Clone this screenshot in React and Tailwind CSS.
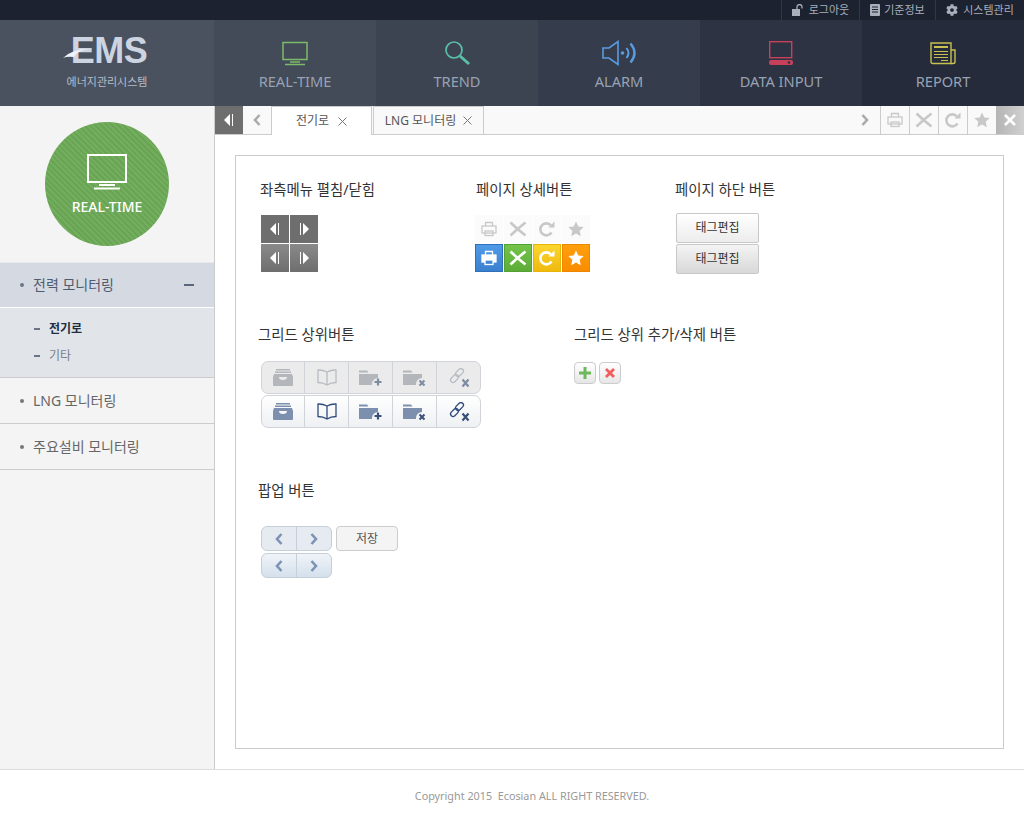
import { FaCog } from 'react-icons/fa'

const FONT = '[font-family:"Noto_Sans","Noto_Sans_CJK_KR",sans-serif]'

// 상단 메뉴 아이콘
function MonitorIcon() {
  return (
    <svg width="28" height="26" viewBox="0 0 28 26" fill="none">
      <rect x="2" y="2.500" width="24" height="17" stroke="#7dbb68" strokeWidth="1.500" />
      <path d="M9 22h10" stroke="#7dbb68" strokeWidth="1.500" />
      <path d="M4 24.500h20" stroke="#7dbb68" strokeWidth="1.500" />
    </svg>
  )
}

function SearchIcon() {
  return (
    <svg width="28" height="26" viewBox="0 0 28 26" fill="none">
      <circle cx="11" cy="10" r="8" stroke="#5bbfa8" strokeWidth="1.700" />
      <path d="M17 16l9 8" stroke="#5bbfa8" strokeWidth="3" />
    </svg>
  )
}

function AlarmIcon() {
  return (
    <svg width="36" height="26" viewBox="0 0 36 26" fill="none" stroke="#5b9be0">
      <path d="M2 8h6l9-6.500v23L8 18H2z" strokeWidth="1.600" />
      <circle cx="21.500" cy="13" r="1.800" fill="#5b9be0" stroke="none" />
      <path d="M25.500 8q4 5 0 10" strokeWidth="2" />
      <path d="M29.500 3.500q8 9.500 0 19" strokeWidth="2.400" />
    </svg>
  )
}

function DataInputIcon() {
  return (
    <svg width="26" height="26" viewBox="0 0 26 26" fill="none">
      <rect x="1.700" y="1.700" width="22" height="16" stroke="#c8405a" strokeWidth="1.400" />
      <rect x="1" y="20" width="24" height="5" rx="2" fill="#c8405a" />
      <circle cx="21" cy="22.500" r="1.300" fill="#2d3342" />
    </svg>
  )
}

function ReportIcon() {
  return (
    <svg width="28" height="26" viewBox="0 0 28 26" fill="none" stroke="#c8c050">
      <path d="M2 3h20v20.500H4q-2 0-2-2z" strokeWidth="1.400" />
      <path d="M22 10h4v12q0 1.500-2 1.500h-2" strokeWidth="1.400" />
      <path d="M5 7h14" strokeWidth="2" />
      <path d="M5 11.500h14M5 14.500h14M5 17.500h14M12 20.500h7" strokeWidth="1" />
    </svg>
  )
}

// 인쇄 / 닫기 / 새로고침 / 즐겨찾기
function PrintIcon({ color = '#c8c8c8', fill = 'none', paper = 'none' }) {
  return (
    <svg width="16" height="16" viewBox="0 0 16 16" fill="none" stroke={color} strokeWidth="1.300">
      <path d="M4.500 5V1.500h7V5" />
      <rect x="1" y="5" width="14" height="7" fill={fill} />
      <rect x="4" y="10" width="8" height="4.500" fill={paper} />
    </svg>
  )
}

function CrossIcon({ color = '#c8c8c8' }) {
  return (
    <svg width="18" height="16" viewBox="0 0 18 16" fill="none" stroke={color} strokeWidth="2.600">
      <path d="M1.500 1.500q6 6 15 13M16.500 1.500q-9 7-15 13" />
    </svg>
  )
}

function RefreshIcon({ color = '#c8c8c8' }) {
  return (
    <svg width="16" height="16" viewBox="0 0 16 16" fill="none">
      <path d="M12.500 11.500a6 6 0 1 1-.5-7" stroke={color} strokeWidth="2.600" />
      <path d="M9.500 6.500h6v-6z" fill={color} />
    </svg>
  )
}

function StarIcon({ color = '#c8c8c8' }) {
  return (
    <svg width="16" height="16" viewBox="0 0 16 16" fill={color}>
      <path d="M8 .5l2.300 5 5.400.6-4 3.700 1.100 5.500L8 12.600l-4.800 2.700 1.100-5.500-4-3.700 5.400-.6z" />
    </svg>
  )
}

function CollapseLeft({ color = '#fff' }) {
  return (
    <svg width="10" height="12" viewBox="0 0 10 12" fill={color}>
      <path d="M6 0v12L0 6z" />
      <rect x="8" y="0" width="1" height="12" />
    </svg>
  )
}

function CollapseRight({ color = '#fff' }) {
  return (
    <svg width="10" height="12" viewBox="0 0 10 12" fill={color}>
      <rect x="1" y="0" width="1" height="12" />
      <path d="M4 0v12l6-6z" />
    </svg>
  )
}

function Chevron({ dir, color = '#aaa', w = 2.600 }) {
  return (
    <svg width="8" height="12" viewBox="0 0 8 12" fill="none" stroke={color} strokeWidth={w}>
      <path d={dir === 'left' ? 'M6.500 1L2 6l4.500 5' : 'M1.500 1L6 6l-4.500 5'} />
    </svg>
  )
}

function SmallX() {
  return (
    <svg width="9" height="9" viewBox="0 0 9 9" stroke="#777" strokeWidth="1" fill="none">
      <path d="M.5.5l8 8M8.500.5l-8 8" />
    </svg>
  )
}

// 그리드 상위버튼 아이콘
function BoxIcon({ c }) {
  return (
    <svg width="20" height="17" viewBox="0 0 20 17" fill={c}>
      <rect x="3" y="0" width="14" height="1.500" />
      <rect x="2" y="2.500" width="16" height="1.500" />
      <path d="M1 5h18l1 3v8a1 1 0 0 1-1 1H1a1 1 0 0 1-1-1V8zM6 8q0 3 4 3t4-3z" fillRule="evenodd" />
    </svg>
  )
}

function BookIcon({ c }) {
  return (
    <svg width="20" height="17" viewBox="0 0 20 17" fill="none" stroke={c} strokeWidth="1.300">
      <path d="M10 3Q6 .8 1 1v12.500q5 0 9 2.500 4-2.500 9-2.500V1q-5-.2-9 2zM10 3v13" />
    </svg>
  )
}

function FolderIcon({ c, mark, markColor }) {
  return (
    <svg width="24" height="18" viewBox="0 0 24 18">
      <path d="M0 1.500h8l1.500 2H0z" fill={c} />
      <path d="M0 5h19v4a6 6 0 0 0-6 6v1H0z" fill={c} />
      {mark === 'plus' ? (
        <path d="M19 9.500v7M15.500 13h7" stroke={markColor} strokeWidth="2.200" />
      ) : (
        <path d="M16.500 11.500l5 5M21.500 11.500l-5 5" stroke={markColor} strokeWidth="2" />
      )}
    </svg>
  )
}

function LinkOffIcon({ c, x }) {
  return (
    <svg width="22" height="20" viewBox="0 0 22 20" fill="none">
      <rect x="9" y="0" width="5" height="9" rx="2.500" transform="rotate(45 11.500 4.500)" stroke={c} strokeWidth="1.300" />
      <rect x="4" y="6" width="5" height="9" rx="2.500" transform="rotate(45 6.500 10.500)" stroke={c} strokeWidth="1.300" />
      <path d="M14.500 11.500l6 7M20.500 11.500l-6 7" stroke={x} strokeWidth="2.200" />
    </svg>
  )
}

function NavItem({ icon, label, bg }) {
  return (
    <div className={`w-[162px] h-full flex flex-col items-center pt-[20px] ${bg}`}>
      <div className="h-[26px] flex items-center">{icon}</div>
      <div className="mt-[5px] text-[14.600px] leading-5 text-[#98a2b3]">{label}</div>
    </div>
  )
}

function Title({ children }) {
  return <h3 className="h-5 text-[14.400px] leading-[22px] font-normal text-[#333] whitespace-nowrap">{children}</h3>
}

function TabTool({ children }) {
  return <div className="w-[29px] h-full flex items-center justify-center border-l border-[#ccc]">{children}</div>
}

function ColorBtn({ cls, children }) {
  return <div className={`w-[28px] h-[28px] flex items-center justify-center border ${cls}`}>{children}</div>
}

function GrayBtn({ cls, children }) {
  return <div className={`w-[28px] h-[28px] flex items-center justify-center ${cls}`}>{children}</div>
}

function GridBar({ cls, icons }) {
  return (
    <div className={`w-[220px] h-[33px] flex rounded-[7px] border border-[#d0d3d8] overflow-hidden ${cls}`}>
      {icons.map((icon, i) => (
        <div key={i} className={i > 0 ? 'w-[44px] flex items-center justify-center border-l border-[#d0d3d8]' : 'w-[42px] flex items-center justify-center'}>
          {icon}
        </div>
      ))}
    </div>
  )
}

function gridIcons(c, markColor, book) {
  return [
    <BoxIcon c={c} />,
    <BookIcon c={book} />,
    <FolderIcon c={c} mark="plus" markColor={markColor} />,
    <FolderIcon c={c} mark="x" markColor={markColor} />,
    <LinkOffIcon c={book} x={markColor} />,
  ]
}

function PopupPager({ cls }) {
  return (
    <div className={`w-[71px] h-[25px] flex rounded-[6px] border border-[#c5ced9] ${cls}`}>
      <div className="w-[35px] flex items-center justify-center border-r border-[#c5ced9]">
        <Chevron dir="left" color="#7c93b5" />
      </div>
      <div className="flex-1 flex items-center justify-center">
        <Chevron dir="right" color="#7c93b5" />
      </div>
    </div>
  )
}

function TagBtn({ cls }) {
  return (
    <div className={`w-[83px] h-[30px] flex items-center justify-center rounded-[2px] border border-[#c8c8c8] text-xs text-[#333] ${cls}`}>
      태그편집
    </div>
  )
}

function MenuRow({ label }) {
  return (
    <div className="h-[46px] pl-[20px] flex items-center border-b border-[#ccc] text-sm text-[#666]">
      <span className="w-[4px] h-[4px] mr-[9px] rounded-full bg-[#777]" />
      {label}
    </div>
  )
}

export default function App() {
  return (
    <div className={`w-[1024px] h-[821px] overflow-hidden flex flex-col bg-white ${FONT}`}>
      {/* 상단 유틸 */}
      <div className="h-[20px] bg-[#1c222f] flex justify-end text-[11px] text-[#a9b0bc]">
        <div className="w-[78px] flex items-center justify-center gap-[4px] border-l border-[#323846]">
          <svg width="13" height="12" viewBox="0 0 13 12" fill="#a9b0bc">
            <rect x="0" y="5" width="8" height="7" />
            <path d="M5 5V3a2.500 2.500 0 0 1 5 0v1.500" fill="none" stroke="#a9b0bc" strokeWidth="1.300" />
          </svg>
          로그아웃
        </div>
        <div className="w-[76px] flex items-center justify-center gap-[4px] border-l border-[#323846]">
          <svg width="10" height="12" viewBox="0 0 10 12">
            <rect width="10" height="12" rx="1" fill="#a9b0bc" />
            <path d="M2 3h6M2 5.500h6M2 8h6" stroke="#1c222f" />
          </svg>
          기준정보
        </div>
        <div className="w-[89px] flex items-center justify-center gap-[5px] border-l border-[#323846]">
          <FaCog size={12} color="#a9b0bc" />
          시스템관리
        </div>
      </div>

      {/* 메인 메뉴 */}
      <div className="h-[86px] flex">
        <div className="w-[214px] bg-[#4a5260] flex flex-col items-center pt-[15px]">
          <div className="relative h-[32px] pl-[4px] text-[36px] leading-[32px] font-bold tracking-[-0.5px] text-[#ccd4e2] [font-family:'Liberation_Sans',sans-serif]">
            EMS
            <svg className="absolute left-[-4px] top-[14px]" width="26" height="9" viewBox="0 0 26 9">
              <path d="M0 9Q9 0 26 0Q13 2 11 8Q4 7 0 9z" fill="#eef2f8" />
            </svg>
          </div>
          <div className="mt-[5px] text-[11px] leading-5 text-[#b6bdc9]">에너지관리시스템</div>
        </div>
        <NavItem icon={<MonitorIcon />} label="REAL-TIME" bg="bg-[#434a58]" />
        <NavItem icon={<SearchIcon />} label="TREND" bg="bg-[#3c4452]" />
        <NavItem icon={<AlarmIcon />} label="ALARM" bg="bg-[#353c4b]" />
        <NavItem icon={<DataInputIcon />} label="DATA INPUT" bg="bg-[#2d3342]" />
        <NavItem icon={<ReportIcon />} label="REPORT" bg="bg-[#252b3a]" />
      </div>

      <div className="flex-1 flex min-h-0">
        {/* 좌측 메뉴 */}
        <aside className="w-[215px] bg-[#f4f4f4] border-r border-[#ccc]">
          <div className="h-[156px] pt-[16px] flex justify-center">
            <div className="w-[124px] h-[124px] rounded-full flex flex-col items-center pt-[32px] bg-[repeating-linear-gradient(45deg,#68a453_0,#68a453_2px,#73ad5e_2px,#73ad5e_4px)]">
              <svg width="40" height="36" viewBox="0 0 40 36" fill="none" stroke="#fff">
                <rect x="1" y="1" width="38" height="27" strokeWidth="2" />
                <path d="M12 31h16" strokeWidth="2" />
                <path d="M7 34.500h26" strokeWidth="2" />
              </svg>
              <div className="mt-[7px] text-[14px] leading-5 font-medium text-white">REAL-TIME</div>
            </div>
          </div>
          <div className="h-[46px] pl-[20px] pr-[20px] flex items-center bg-[#d5dae2] border-t border-[#e6e8ec] border-b-1 border-b-white text-sm text-[#4f5b70]">
            <span className="w-[4px] h-[4px] mr-[9px] rounded-full bg-[#6b7688]" />
            <span className="flex-1">전력 모니터링</span>
            <span className="w-[10px] h-[2px] bg-[#59667b]" />
          </div>
          <div className="h-[70px] pt-[11px] pl-[34px] bg-[#e1e5ea] border-b border-[#ccc] text-xs">
            <div className="h-[20px] flex items-center font-bold text-[#222d40]">
              <span className="w-[6px] h-[2px] mr-[9px] bg-[#6a7588]" />
              전기로
            </div>
            <div className="mt-[7px] h-[20px] flex items-center text-[#7a7f88]">
              <span className="w-[6px] h-[2px] mr-[9px] bg-[#6a7588]" />
              기타
            </div>
          </div>
          <MenuRow label="LNG 모니터링" />
          <MenuRow label="주요설비 모니터링" />
        </aside>

        <main className="flex-1 min-w-0">
          {/* 탭 바 */}
          <div className="h-[29px] flex bg-[#f9f9f9] border-b border-[#ccc]">
            <div className="w-[28px] h-[28px] bg-[#6e6e6e] flex items-center justify-center">
              <CollapseLeft />
            </div>
            <div className="w-[28px] flex items-center justify-center">
              <Chevron dir="left" />
            </div>
            <div className="w-[101px] h-[29px] flex items-center justify-center gap-[9px] bg-white border border-b-0 border-[#ccc] text-xs text-[#555]">
              전기로 <SmallX />
            </div>
            <div className="w-[111px] ml-[1px] h-[28px] flex items-center justify-center gap-[7px] border border-b-0 border-[#ccc] text-xs text-[#555]">
              LNG 모니터링 <SmallX />
            </div>
            <div className="flex-1 flex justify-end">
              <div className="w-[30px] flex items-center justify-center">
                <Chevron dir="right" />
              </div>
              <TabTool><PrintIcon /></TabTool>
              <TabTool><CrossIcon /></TabTool>
              <TabTool><RefreshIcon /></TabTool>
              <TabTool><StarIcon /></TabTool>
              <div className="w-[28px] h-[28px] flex items-center justify-center bg-gradient-to-r from-[#b4b4b4] to-[#d0d0d0]">
                <svg width="12" height="12" viewBox="0 0 12 12" stroke="#fff" strokeWidth="2.500">
                  <path d="M1 1l10 10M11 1L1 11" />
                </svg>
              </div>
            </div>
          </div>

          {/* 버튼 모음 */}
          <div className="mt-5 ml-5 mr-[20px] h-[594px] border border-[#ccc] pt-[23px] pl-[24px]">
            <div className="flex">
              <section className="w-[216px]">
                <Title>좌측메뉴 펼침/닫힘</Title>
                <div className="mt-4 ml-[1px] grid grid-cols-[28px_28px] gap-[1px]">
                  <GrayBtn cls="bg-[#6e6e6e]"><CollapseLeft /></GrayBtn>
                  <GrayBtn cls="bg-[#6e6e6e]"><CollapseRight /></GrayBtn>
                  <GrayBtn cls="bg-gradient-to-b from-[#8a8a8a] to-[#6e6e6e]"><CollapseLeft /></GrayBtn>
                  <GrayBtn cls="bg-gradient-to-b from-[#8a8a8a] to-[#6e6e6e]"><CollapseRight /></GrayBtn>
                </div>
              </section>
              <section className="w-[199px]">
                <Title>페이지 상세버튼</Title>
                <div className="mt-4 ml-[-1px] grid grid-cols-[28px_28px_28px_28px] gap-[1px]">
                  <GrayBtn cls="bg-[#fbfbfb]"><PrintIcon /></GrayBtn>
                  <GrayBtn cls="bg-[#fbfbfb]"><CrossIcon /></GrayBtn>
                  <GrayBtn cls="bg-[#fbfbfb]"><RefreshIcon /></GrayBtn>
                  <GrayBtn cls="bg-[#fbfbfb]"><StarIcon /></GrayBtn>
                  <ColorBtn cls="bg-gradient-to-b from-[#4f9ae6] to-[#3a80cf] border-[#2f70bd]"><PrintIcon color="#fff" fill="#fff" paper="#3f86d6" /></ColorBtn>
                  <ColorBtn cls="bg-gradient-to-b from-[#74c44a] to-[#5cac38] border-[#54a032]"><CrossIcon color="#fff" /></ColorBtn>
                  <ColorBtn cls="bg-gradient-to-b from-[#fbd62e] to-[#efba0c] border-[#e8b408]"><RefreshIcon color="#fff" /></ColorBtn>
                  <ColorBtn cls="bg-gradient-to-b from-[#ff9f0e] to-[#f98d00] border-[#f08600]"><StarIcon color="#fff" /></ColorBtn>
                </div>
              </section>
              <section>
                <Title>페이지 하단 버튼</Title>
                <div className="mt-[14px] ml-[1px] flex flex-col gap-[1px]">
                  <TagBtn cls="bg-gradient-to-b from-[#ffffff] to-[#ececec]" />
                  <TagBtn cls="bg-gradient-to-b from-[#f4f4f4] to-[#d8d8d8]" />
                </div>
              </section>
            </div>

            <div className="flex mt-[50px] -ml-[2px]">
              <section className="w-[316px]">
                <Title>그리드 상위버튼</Title>
                <div className="mt-[17px] ml-[3px] flex flex-col gap-[1px]">
                  <GridBar cls="bg-[#ebebeb]" icons={gridIcons('#b3b6ba', '#7d8ba3', '#b8bcc2')} />
                  <GridBar cls="bg-gradient-to-b from-white to-[#eef0f3]" icons={gridIcons('#7c8fae', '#3a5078', '#2d4a7c')} />
                </div>
              </section>
              <section>
                <Title>그리드 상위 추가/삭제 버튼</Title>
                <div className="mt-[18px] flex gap-[3px]">
                  <div className="w-[22px] h-[22px] flex items-center justify-center rounded-[4px] border border-[#ccc] bg-gradient-to-b from-white to-[#e6e6e6]">
                    <svg width="12" height="12" viewBox="0 0 12 12" stroke="#6cb85a" strokeWidth="3">
                      <path d="M6 0v12M0 6h12" />
                    </svg>
                  </div>
                  <div className="w-[22px] h-[22px] flex items-center justify-center rounded-[4px] border border-[#ccc] bg-gradient-to-b from-white to-[#e6e6e6]">
                    <svg width="10" height="10" viewBox="0 0 10 10" stroke="#f25c5c" strokeWidth="2.800">
                      <path d="M1 1l8 8M9 1L1 9" />
                    </svg>
                  </div>
                </div>
              </section>
            </div>

            <section className="mt-[52px] -ml-[2px]">
              <Title>팝업 버튼</Title>
              <div className="mt-[26px] ml-[3px] flex gap-[4px] items-start">
                <div className="flex flex-col gap-[2px]">
                  <PopupPager cls="bg-[#e6ebf1]" />
                  <PopupPager cls="bg-gradient-to-b from-[#f0f4f8] to-[#d4e0ec]" />
                </div>
                <div className="w-[62px] h-[25px] flex items-center justify-center rounded-[4px] border border-[#ccc] bg-[#f4f4f4] text-xs text-[#555]">
                  저장
                </div>
              </div>
            </section>
          </div>
        </main>
      </div>

      {/* 하단 */}
      <footer className="h-[52px] shrink-0 border-t border-[#ddd] flex items-center justify-center pl-[40px] pt-[1px] text-[10.800px] text-[#999]">
        Copyright 2015&nbsp; Ecosian ALL RIGHT RESERVED.
      </footer>
    </div>
  )
}
